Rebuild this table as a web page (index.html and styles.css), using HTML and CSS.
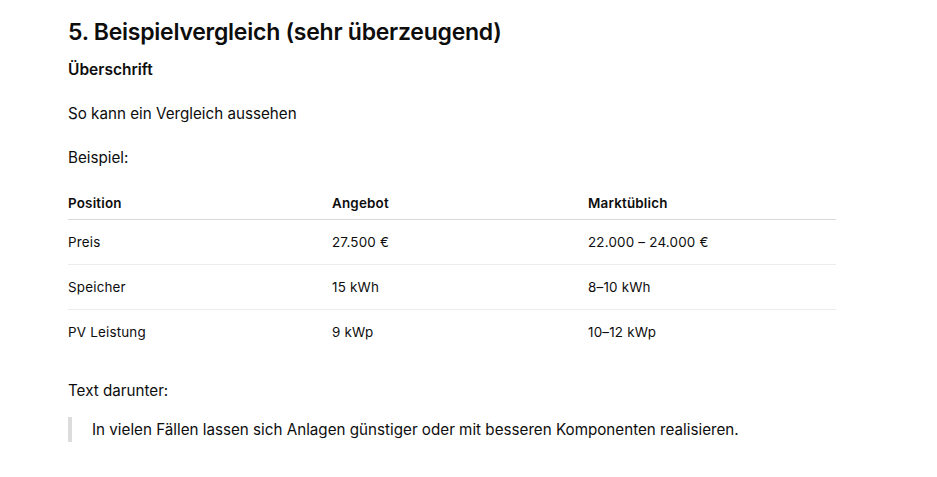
FILE: index.html
```html
<!DOCTYPE html>
<html lang="de">
<head>
<meta charset="utf-8">
<title>Beispielvergleich</title>
<link rel="stylesheet" href="styles.css">
</head>
<body>
<main class="doc">
  <h2 class="title">5. Beispielvergleich (sehr überzeugend)</h2>
  <h3 class="sub">Überschrift</h3>
  <p class="para">So kann ein Vergleich aussehen</p>
  <p class="para">Beispiel:</p>
  <table class="cmp">
    <thead>
      <tr><th class="c1">Position</th><th class="c2">Angebot</th><th class="c3">Marktüblich</th></tr>
    </thead>
    <tbody>
      <tr><td>Preis</td><td>27.500 €</td><td>22.000 – 24.000 €</td></tr>
      <tr><td>Speicher</td><td>15 kWh</td><td>8–10 kWh</td></tr>
      <tr><td>PV Leistung</td><td>9 kWp</td><td>10–12 kWp</td></tr>
    </tbody>
  </table>
  <p class="para after">Text darunter:</p>
  <blockquote class="quote">In vielen Fällen lassen sich Anlagen günstiger oder mit besseren Komponenten realisieren.</blockquote>
</main>
</body>
</html>
```
FILE: styles.css
```css
* { box-sizing: border-box; }
html, body { margin: 0; padding: 0; background: #fff; }
body {
  font-family: Inter, "Noto Sans", "Liberation Sans", sans-serif;
  color: #0d0d0d;
}
.doc {
  width: 768px;
  margin-left: 68px;
  padding-top: 17px;
}
.title {
  margin: 0;
  font-size: 23px;
  line-height: 30px;
  font-weight: 600;
  letter-spacing: -0.25px;
}
.sub {
  margin: 12px 0 0;
  font-size: 15.5px;
  line-height: 22px;
  font-weight: 600;
}
.para {
  margin: 21px 0 0;
  font-size: 15.2px;
  line-height: 23px;
}
.para.after { margin-top: 25px; }
.cmp {
  width: 768px;
  margin-top: 22px;
  border-collapse: collapse;
  font-size: 13.4px;
  letter-spacing: 0.2px;
}
.cmp th {
  text-align: left;
  font-weight: 600;
  height: 28px;
  vertical-align: top;
  padding: 4px 0 0;
  border-bottom: 1px solid #d9d9d9;
}
.cmp .c1 { width: 264px; }
.cmp .c2 { width: 256px; }
.cmp td {
  padding: 0;
  height: 45px;
  vertical-align: middle;
  border-bottom: 1px solid #ececec;
}
.cmp tbody tr:last-child td { border-bottom: none; }
.quote {
  margin: 15px 0 0;
  padding: 1px 0 1px 20px;
  border-left: 4px solid #dcdcdc;
  font-size: 15.2px;
  line-height: 23px;
}
```
